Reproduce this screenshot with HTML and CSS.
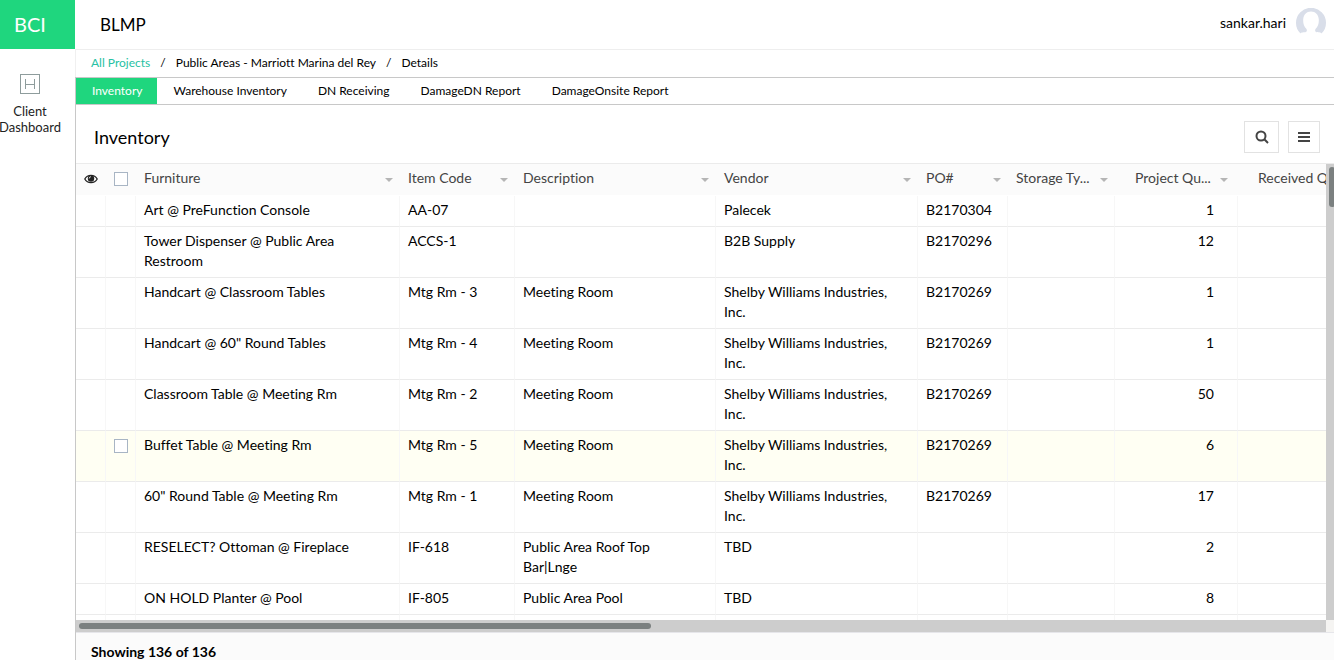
FILE: index.html
```
<!DOCTYPE html>
<html lang="en">
<head>
<meta charset="utf-8">
<title>BLMP - Inventory</title>
<link rel="stylesheet" href="styles.css">
</head>
<body>
<div class="app">
  <aside class="sidebar">
    <div class="logo">BCI</div>
    <a class="side-item" href="#">
      <svg class="side-icon" viewBox="0 0 20 20" aria-hidden="true"><rect x=".5" y=".5" width="19" height="19"/><path d="M5.500 5v10M14.500 5v10M5.500 10.500h9"/></svg>
      <span class="side-label">Client Dashboard</span>
    </a>
  </aside>
  <div class="page">
    <header class="topbar">
      <div class="app-name">BLMP</div>
      <div class="user">
        <span>sankar.hari</span>
        <svg class="avatar" viewBox="0 0 30 30" aria-hidden="true"><path fill="#d9dee9" d="M4.500 25.500A15 15 0 1 1 25.500 25.500C25 24 22 24.500 20 24C18.800 23.500 19 22 19.500 21C22 18.500 23 15.500 22.800 11.500C22.500 6.500 19.500 3.500 15 3.500S7.500 6.500 7.200 11.500C7 15.500 8 18.500 10.500 21C11 22 11.200 23.500 10 24C8 24.500 5 24 4.500 25.500Z"/></svg>
      </div>
    </header>
    <nav class="crumbs" aria-label="Breadcrumb">
      <a class="crumb-root" href="#">All Projects</a><span>/</span><a href="#">Public Areas - Marriott Marina del Rey</a><span>/</span><a href="#">Details</a>
    </nav>
    <div class="content">
      <nav class="tabs">
        <a class="tab active" href="#">Inventory</a>
        <a class="tab" href="#">Warehouse Inventory</a>
        <a class="tab" href="#">DN Receiving</a>
        <a class="tab" href="#">DamageDN Report</a>
        <a class="tab" href="#">DamageOnsite Report</a>
      </nav>
      <div class="toolbar">
        <h1>Inventory</h1>
        <div class="actions">
          <button class="tool search" type="button" aria-label="Search"><svg viewBox="0 0 14 14" aria-hidden="true"><circle cx="6" cy="6" r="4.500"/><path d="M9.300 9.300L13 13"/></svg></button>
          <button class="tool" type="button" aria-label="Menu"><svg viewBox="0 0 14 14" aria-hidden="true"><path d="M1 3h12M1 7h12M1 11h12"/></svg></button>
        </div>
      </div>
      <div class="grid">
        <div class="viewport">
          <table>
            <colgroup><col class="c-eye"><col class="c-check"><col class="c-furn"><col class="c-code"><col class="c-desc"><col class="c-vendor"><col class="c-po"><col class="c-storage"><col class="c-qty"><col class="c-recv"></colgroup>
            <thead>
              <tr>
                <th class="tight"><svg class="eye" viewBox="0 0 14 10" aria-hidden="true"><path fill="none" stroke="#222" stroke-width="1.300" d="M.8 5C3.500.2 10.500.2 13.200 5C10.500 9.800 3.500 9.800.8 5Z"/><circle cx="7" cy="4.500" r="3.200" fill="#222"/><path fill="none" stroke="#fff" stroke-width=".8" d="M5.200 4.500A1.800 1.800 0 0 1 7 2.700"/></svg></th>
                <th class="tight"><input type="checkbox" aria-label="Select all"></th>
                <th><div class="head">Furniture<i class="caret"></i></div></th>
                <th><div class="head">Item Code<i class="caret"></i></div></th>
                <th><div class="head">Description<i class="caret"></i></div></th>
                <th><div class="head">Vendor<i class="caret"></i></div></th>
                <th><div class="head">PO#<i class="caret"></i></div></th>
                <th><div class="head">Storage Ty...<i class="caret"></i></div></th>
                <th class="num-head"><div class="head">Project Qu...<i class="caret"></i></div></th>
                <th class="num-head"><div class="head">Received Q</div></th>
              </tr>
            </thead>
            <tbody>
              <tr><td></td><td></td><td>Art @ PreFunction Console</td><td>AA-07</td><td></td><td>Palecek</td><td>B2170304</td><td></td><td class="num">1</td><td></td></tr>
              <tr><td></td><td></td><td>Tower Dispenser @ Public Area<br>Restroom</td><td>ACCS-1</td><td></td><td>B2B Supply</td><td>B2170296</td><td></td><td class="num">12</td><td></td></tr>
              <tr><td></td><td></td><td>Handcart @ Classroom Tables</td><td>Mtg Rm - 3</td><td>Meeting Room</td><td>Shelby Williams Industries,<br>Inc.</td><td>B2170269</td><td></td><td class="num">1</td><td></td></tr>
              <tr><td></td><td></td><td>Handcart @ 60" Round Tables</td><td>Mtg Rm - 4</td><td>Meeting Room</td><td>Shelby Williams Industries,<br>Inc.</td><td>B2170269</td><td></td><td class="num">1</td><td></td></tr>
              <tr><td></td><td></td><td>Classroom Table @ Meeting Rm</td><td>Mtg Rm - 2</td><td>Meeting Room</td><td>Shelby Williams Industries,<br>Inc.</td><td>B2170269</td><td></td><td class="num">50</td><td></td></tr>
              <tr class="hovered"><td></td><td class="tight"><input type="checkbox" aria-label="Select Buffet Table"></td><td>Buffet Table @ Meeting Rm</td><td>Mtg Rm - 5</td><td>Meeting Room</td><td>Shelby Williams Industries,<br>Inc.</td><td>B2170269</td><td></td><td class="num">6</td><td></td></tr>
              <tr><td></td><td></td><td>60" Round Table @ Meeting Rm</td><td>Mtg Rm - 1</td><td>Meeting Room</td><td>Shelby Williams Industries,<br>Inc.</td><td>B2170269</td><td></td><td class="num">17</td><td></td></tr>
              <tr><td></td><td></td><td>RESELECT? Ottoman @ Fireplace</td><td>IF-618</td><td>Public Area Roof Top<br>Bar|Lnge</td><td>TBD</td><td></td><td></td><td class="num">2</td><td></td></tr>
              <tr><td></td><td></td><td>ON HOLD Planter @ Pool</td><td>IF-805</td><td>Public Area Pool</td><td>TBD</td><td></td><td></td><td class="num">8</td><td></td></tr>
              <tr><td></td><td></td><td></td><td></td><td></td><td></td><td></td><td></td><td></td><td></td></tr>
            </tbody>
          </table>
        </div>
        <div class="vbar"><div class="vthumb"></div></div>
        <div class="hbar"><div class="hthumb"></div></div>
        <div class="corner"></div>
      </div>
      <footer class="summary">Showing 136 of 136</footer>
    </div>
  </div>
</div>
</body>
</html>
```
FILE: styles.css
```
* { box-sizing: border-box; }
body { margin: 0; font-family: Lato, "Liberation Sans", sans-serif; font-size: 14px; font-variant-ligatures: none; line-height: 20px; color: #000; background: #fff; }
a { color: inherit; text-decoration: none; }
.app { display: flex; height: 100vh; overflow: hidden; }

.sidebar { flex: 0 0 75px; }
.logo { height: 49px; padding-left: 14px; background: #1fd67e; color: #fff; font-size: 20px; line-height: 49px; }
.side-item { display: flex; flex-direction: column; align-items: center; width: 60px; padding-top: 25px; color: #222; font-size: 13px; line-height: 16px; text-align: center; }
.side-icon { width: 20px; height: 20px; margin-bottom: 9px; fill: none; stroke: #8e9c9c; stroke-width: 1; }
.side-label { width: min-content; }

.page { flex: 1; min-width: 0; display: flex; flex-direction: column; }
.topbar { display: flex; justify-content: space-between; align-items: center; height: 50px; padding: 0 8px 3px 25px; border-bottom: 1px solid #eee; }
.app-name { padding-top: 3px; font-size: 17px; }
.user { display: flex; align-items: center; gap: 10px; }
.avatar { width: 30px; height: 30px; }
.crumbs { display: flex; gap: 10px; height: 27px; padding-left: 15px; border-left: 1px solid #f0f0f0; font-size: 12px; line-height: 26px; }
.crumb-root { color: #27c1a3; }

.content { flex: 1; min-height: 0; display: flex; flex-direction: column; border-left: 1px solid #c8c8c8; }
.tabs { display: flex; flex: none; border-top: 1px solid #c8c8c8; border-bottom: 1px solid #c8c8c8; font-size: 12px; line-height: 26px; }
.tab { padding: 0 15px 0 16px; }
.tab.active { background: #1fd67e; color: #fff; }
.toolbar { display: flex; flex: none; justify-content: space-between; align-items: center; height: 59px; padding: 5px 14px 0 18px; border-bottom: 1px solid #ebebeb; }
h1 { margin: 0; font-size: 18px; font-weight: 400; }
.actions { display: flex; gap: 9px; }
.tool { display: grid; place-items: center; width: 32px; height: 32px; padding: 0; border: 1px solid #e2e2e2; background: #fff; }
.tool.search { width: 35px; }
.tool svg { width: 14px; height: 14px; fill: none; stroke: #444; stroke-width: 2; }

.grid { flex: 1; min-height: 0; display: grid; grid-template: minmax(0, 1fr) 12px / minmax(0, 1fr) 8px; }
.viewport { overflow: hidden; }
table { width: 1312px; table-layout: fixed; border-collapse: separate; border-spacing: 0; }
.c-eye, .c-check { width: 30px; }
.c-furn { width: 264px; }
.c-code { width: 115px; }
.c-desc { width: 201px; }
.c-vendor { width: 202px; }
.c-po { width: 90px; }
.c-storage { width: 107px; }
.c-qty { width: 123px; }
.c-recv { width: 150px; }
th { height: 32px; padding: 0 7px 4px 8px; background: linear-gradient(#fbfbfb, #fbfbfb) no-repeat 0 0 / 100% 31px; color: #444; font-weight: 400; text-align: left; white-space: nowrap; }
th.num-head { padding-left: 20px; padding-right: 10px; }
.head { display: flex; align-items: center; justify-content: space-between; }
.caret { border: 4px solid transparent; border-top: 4px solid #b5b5b5; border-bottom: 0; margin-top: 4px; }
td { height: 31px; padding: 4px 8px 6px; border-right: 1px solid #f7f7f7; border-bottom: 1px solid #ebebeb; vertical-align: top; white-space: nowrap; }
.num { padding-right: 23px; text-align: right; }
.hovered td { background: #fffff3; }
th.tight { padding: 0 7px 2px 8px; }
td.tight { padding-right: 7px; }
.eye { display: block; width: 14px; height: 10px; }
input[type="checkbox"] { appearance: none; display: block; width: 14px; height: 14px; margin: 0; border: 1px solid #a8b5c4; background: #fff; }
td input[type="checkbox"] { margin-top: 4px; }
.vbar { overflow: hidden; padding: 3px 0 0 3px; background: #cdcdcd; }
.vthumb { width: 6px; height: 40px; border-radius: 3px; background: #7b8080; }
.hbar { padding: 3px; background: #cdcdcd; }
.hthumb { width: 46%; height: 6px; border-radius: 3px; background: #7b8080; }
.corner { background: #f5f4f2; }
.summary { flex: none; height: 28px; padding: 9px 15px 0; border-top: 1px solid #e6e6ea; background: #fbfbfb; font-weight: 700; overflow: hidden; }
```
